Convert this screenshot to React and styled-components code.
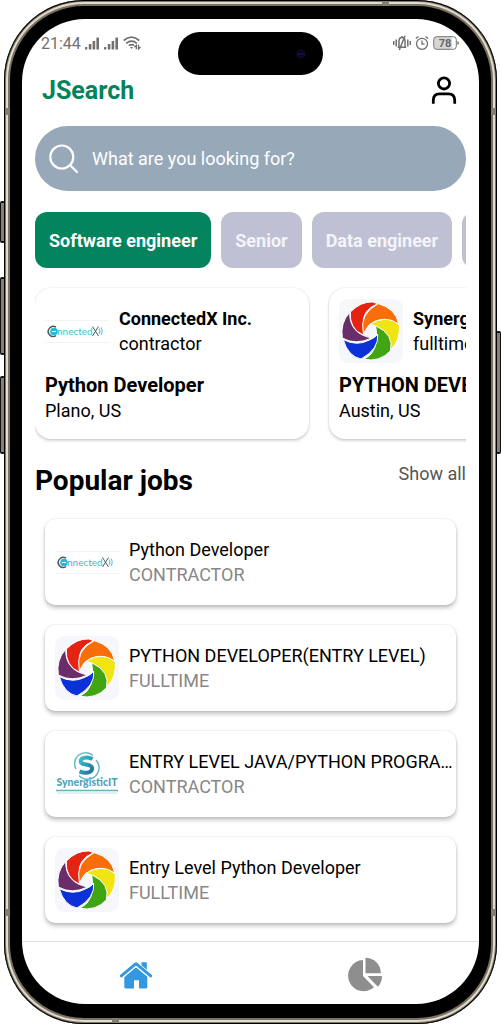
import React, { useState } from "react";
import styled, { createGlobalStyle, css } from "styled-components";

const GlobalStyle = createGlobalStyle`
  * { box-sizing: border-box; }
  body { margin: 0; background: #fff; color: #000; font-family: Roboto, "Liberation Sans", sans-serif; }
  h1, h2, h3, p, ul { margin: 0; padding: 0; }
  button, input { font: inherit; border: 0; }
  svg { display: block; }
`;

const Stage = styled.div`
  position: relative;
  padding: 0 4px;
`;

const Phone = styled.div`
  position: relative;
  display: flex;
  min-height: 100vh;
  padding: 19px 18px 20px;
  border-radius: 80px;
  background: #000;
  box-shadow: inset 0 0 0 1px #000, inset 0 0 0 2px #7d766a,
    inset 0 0 0 4px #e2dccf, inset 0 0 0 6px #7b7163;
`;

const SideKey = styled.span`
  position: absolute;
  top: ${(p) => p.$top}px;
  ${(p) => (p.$right ? "right: 0;" : "left: 0;")}
  width: 5px;
  height: ${(p) => p.$size}px;
  border: solid #111;
  border-width: 2px 1px;
  border-radius: 2px;
  background: #88816f;
`;

const Antenna = styled.span`
  position: absolute;
  background: #857d6e;
  ${(p) => (p.$vertical ? "width: 7px; height: 5px;" : "width: 5px; height: 7px;")}
  ${(p) => p.$side}: 1px;
  ${(p) => p.$from}: 108px;
`;

const Screen = styled.main`
  position: relative;
  flex: 1;
  min-width: 0;
  display: flex;
  flex-direction: column;
  overflow: hidden;
  border-radius: 63px;
  background: #fff;
`;

const Island = styled.div`
  position: absolute;
  top: 13px;
  left: 50%;
  width: 145px;
  height: 43px;
  margin-left: -73px;
  border-radius: 22px;
  background: #000;
  display: flex;
  align-items: center;
  justify-content: flex-end;
  padding-right: 16px;
`;

const StatusBar = styled.div`
  display: flex;
  align-items: center;
  justify-content: space-between;
  height: 48px;
  padding: 0 20px 0 19px;
  color: #707070;
  font-size: 16px;
`;

const StatusGroup = styled.div`
  display: flex;
  align-items: center;
  gap: 4px;
`;

const Header = styled.header`
  display: flex;
  align-items: center;
  justify-content: space-between;
  height: 48px;
  padding: 0 22px 0 20px;
`;

const Brand = styled.h1`
  color: #03845c;
  font-size: 25px;
  line-height: 32px;
`;

const IconButton = styled.button`
  padding: 0;
  background: none;
  color: #000;
`;

const Search = styled.label`
  display: flex;
  align-items: center;
  gap: 13px;
  height: 65px;
  margin: 11px 13px 0;
  padding: 0 24px 0 14px;
  border-radius: 33px;
  background: #97a9b8;
  color: #fff;
`;

const SearchInput = styled.input`
  flex: 1;
  min-width: 0;
  padding: 0;
  outline: 0;
  background: transparent;
  color: #fff;
  font-size: 18px;
  &::placeholder { color: #fff; opacity: 1; }
`;

const Chips = styled.nav`
  display: flex;
  gap: 10px;
  margin: 21px 13px 0;
  overflow: hidden;
`;

const Chip = styled.button`
  flex: none;
  height: 56px;
  padding: 0 14px;
  border-radius: 12px;
  background: ${(p) => (p.$active ? "#03845c" : "#bfc0d3")};
  color: ${(p) => (p.$active ? "#fff" : "#f3f4f9")};
  font-size: 18px;
  font-weight: 700;
  white-space: nowrap;
`;

const Carousel = styled.section`
  display: flex;
  gap: 20px;
  margin: 18px 13px 0;
  padding: 2px 0 8px;
  overflow: hidden;
`;

const cardBase = css`
  padding: 11px 10px;
  background: #fff;
`;

const JobCard = styled.article`
  ${cardBase}
  flex: none;
  width: 274px;
  height: 151px;
  border-radius: 16px;
  box-shadow: 0 0 2px rgba(0, 0, 0, 0.14), 0 2px 3px rgba(0, 0, 0, 0.16);
  white-space: nowrap;
`;

const CardTop = styled.div`
  display: flex;
  align-items: center;
  gap: 10px;
  margin-bottom: 10px;
`;

const Company = styled.h3`
  font-size: 18px;
  line-height: 25px;
`;

const JobTitle = styled.h3`
  font-size: 20px;
  line-height: 25px;
  overflow: hidden;
`;

const Detail = styled.p`
  font-size: 18px;
  line-height: 25px;
`;

const SectionHead = styled.div`
  display: flex;
  align-items: flex-start;
  justify-content: space-between;
  margin: 17px 13px 0;
`;

const SectionTitle = styled.h2`
  font-size: 28px;
  line-height: 34px;
`;

const ShowAll = styled.a`
  color: #555;
  font-size: 18px;
  line-height: 20px;
  text-decoration: none;
`;

const JobList = styled.ul`
  display: flex;
  flex-direction: column;
  gap: 20px;
  margin: 21px 23px 17px;
  list-style: none;
`;

const JobRow = styled.li`
  ${cardBase}
  display: flex;
  align-items: center;
  gap: 10px;
  padding-right: 3px;
  border-radius: 10px;
  box-shadow: 0 0 2px rgba(0, 0, 0, 0.14), 0 3px 4px rgba(0, 0, 0, 0.24);
`;

const RowText = styled.div`
  flex: 1;
  min-width: 0;
`;

const RowTitle = styled.p`
  font-size: 18px;
  line-height: 25px;
  overflow: hidden;
  text-overflow: ellipsis;
  white-space: nowrap;
`;

const RowType = styled(Detail)`
  color: #878787;
`;

const TabBar = styled.nav`
  display: flex;
  height: 63px;
  margin-top: auto;
  border-top: 1px solid #e0e0e0;
`;

const Tab = styled.button`
  flex: 1;
  display: flex;
  align-items: center;
  justify-content: center;
  padding: 4px 0 0;
  background: none;
  color: ${(p) => (p.$active ? "#3498e0" : "#8e8e8e")};
`;

const Bars = () => (
  <svg width="15" height="13" viewBox="0 0 15 13" fill="currentColor" aria-hidden="true">
    <rect x="0" y="10" width="2.300" height="2.5" rx=".6" />
    <rect x="3.800" y="7" width="2.600" height="5.5" rx=".6" />
    <rect x="7.600" y="4" width="2.600" height="8.5" rx=".6" />
    <rect x="11.400" y="0.5" width="2.600" height="12" rx=".6" />
  </svg>
);

const Wifi = () => (
  <svg width="18" height="14" viewBox="0 0 18 14" fill="none" stroke="currentColor" strokeWidth="1.7" aria-hidden="true">
    <path d="M.7 4.5Q8.5-2.2 16.3 4.5M3.2 7.3Q8.5 2.8 13.8 7.3M5.8 9.7Q8.5 7.6 11.2 9.4" />
    <path d="M7 11h3l-1.500 2z" fill="currentColor" stroke="none" />
    <path d="M13.400 13.300V9.300l-2 2M15.500 8.800v4.200l2-2" strokeWidth="1.300" />
  </svg>
);

const Vibrate = () => (
  <svg width="18" height="16" viewBox="0 0 18 16" fill="none" stroke="currentColor" strokeWidth="1.500" aria-hidden="true">
    <path d="M.7 6v4M3.200 4.500v7M14.800 4.500v7M17.300 6v4M4.700 12.300h8.600M6 12V6q0-3.500 3-3.500t3 3.500v6M12 .8 6.300 15M9 2.500V1" />
  </svg>
);

const Alarm = () => (
  <svg width="14" height="16" viewBox="0 0 14 16" fill="none" stroke="currentColor" strokeWidth="1.300" aria-hidden="true">
    <circle cx="7" cy="8.800" r="5.500" />
    <path d="M7 5.500v3.700h2.600M.8 3.600 3.500 1.400M13.200 3.600l-2.700-2.200" />
  </svg>
);

const Battery = () => (
  <svg width="26" height="14" viewBox="0 0 26 14" aria-hidden="true">
    <rect x="1" y="1" width="18" height="12" rx="2" fill="#d6d6d6" />
    <rect x=".7" y=".7" width="22.600" height="12.600" rx="3" fill="none" stroke="#747474" />
    <path d="M25 5.500v3" stroke="#747474" strokeWidth="1.500" />
    <text x="12" y="11" textAnchor="middle" fontSize="11" fontWeight="700" fill="#666">78</text>
  </svg>
);

const Camera = () => (
  <svg width="12" height="12" viewBox="0 0 12 12" aria-hidden="true">
    <circle cx="6" cy="6" r="5" fill="#080414" />
    <circle cx="6" cy="6" r="3.500" fill="none" stroke="#11103a" />
    <circle cx="4.500" cy="6" r="1" fill="#1b1d7c" />
    <circle cx="7.500" cy="6" r="1" fill="#1b1d7c" />
  </svg>
);

const Person = () => (
  <svg width="26" height="30" viewBox="0 0 26 30" fill="none" stroke="currentColor" strokeWidth="2.800" aria-hidden="true">
    <circle cx="13" cy="7.400" r="5.600" />
    <path d="M2.300 27.800v-3.300q0-6.600 6.200-6.600h9q6.200 0 6.200 6.600v3.300" />
  </svg>
);

const Magnifier = () => (
  <svg width="30" height="30" viewBox="0 0 30 30" fill="none" stroke="currentColor" strokeWidth="2.200" strokeLinecap="round" aria-hidden="true">
    <circle cx="12.800" cy="13" r="11.500" />
    <path d="m21 21 7 7" />
  </svg>
);

const House = () => (
  <svg width="34" height="28" viewBox="0 0 34 28" aria-hidden="true">
    <path fill="currentColor" d="M22.500 7V1.200h5.300v10.500z" />
    <path fill="currentColor" d="M5.300 15 17 5.300 28.300 15v11q0 1.500-1.500 1.500H20v-8.300h-5v8.300H6.800q-1.500 0-1.500-1.500z" />
    <path fill="none" stroke="#fff" strokeWidth="5" d="M2 15.500 17 3l15 12.500" />
    <path fill="none" stroke="currentColor" strokeWidth="3" strokeLinecap="round" strokeLinejoin="round" d="M2.300 14.800 17 2.700l14.700 12.100" />
  </svg>
);

const Pie = () => (
  <svg width="36" height="36" viewBox="0 0 36 36" fill="currentColor" aria-hidden="true">
    <path d="M16 3v16l11 11.300A15.600 15.600 0 1 1 16 3z" />
    <path d="M18.500 .7A15.300 15.300 0 0 1 33.800 16.200H18.500z" />
    <path d="M20.500 19H35q0 6.500-4.200 10.800z" />
  </svg>
);

const Pinwheel = () => (
  <svg width="64" height="64" viewBox="0 0 192 192" aria-hidden="true">
    <rect width="192" height="192" rx="27" fill="#f5f7fa" />
    <g stroke="#fff" strokeWidth="3" strokeLinejoin="round">
      <path fill="#e42313" d="M34 39Q66 7 101 9l15 5Q66 34 73 82l2 27Q30 91 34 39z" />
      <path fill="#fa6e0a" d="M118 14Q170 28 179 75 127 45 89 79L73 104Q60 43 118 14z" />
      <path fill="#f1e413" d="M181 77q4 48-27 77Q159 93 93 76 141 45 181 77z" />
      <path fill="#40a510" d="M154 156q-32 34-79 25 50-25 35-101 57 27 44 76z" />
      <path fill="#0b32d6" d="M13 122q42 21 78 1 19-7 25-18 5 45-50 75Q27 172 13 122z" />
      <path fill="#6b2d69" d="M32 40q-29 32-22 77 40 23 88 0Q31 104 32 40z" />
    </g>
  </svg>
);

const ConnectedX = () => (
  <svg width="64" height="64" viewBox="0 0 64 64" role="img" aria-label="ConnectedX">
    <path d="M0 21.500h64M0 43.500h64" stroke="#f3f3f3" />
    <path d="M11 28.200a5 5 0 1 0 0 8.400" fill="none" stroke="#555" strokeWidth="1.500" />
    <circle cx="9" cy="32.500" r="3.800" fill="#28b8df" />
    <path d="M7 32.500h4" stroke="#fff" />
    <text x="12" y="36" fontFamily="Lato, sans-serif" fontSize="10" fill="#42bdd3">nnected</text>
    <path d="m47.500 27.500 6 9.500M53.500 27.500l-6 9.500" stroke="#555" />
    <path d="M54 29.500q2 3 0 5.500M56 28.500q2.500 4 0 7.500" fill="none" stroke="#6acbdc" strokeWidth="1.200" />
  </svg>
);

const SynergisticIT = () => (
  <svg width="64" height="64" viewBox="0 0 64 64" role="img" aria-label="SynergisticIT">
    <defs>
      <linearGradient id="aqua" x1="0" y1="0" x2="1" y2="1">
        <stop offset="0" stopColor="#39c5cf" />
        <stop offset="1" stopColor="#246fa0" />
      </linearGradient>
    </defs>
    <path d="M38 13.500A11 11 0 0 0 21 27M24 33.500A11 11 0 0 0 41 18" fill="none" stroke="#6bb9c5" strokeWidth="1.500" />
    <path d="M37.500 17q-6.500-3-11 0-3 4.500 4.500 5.500 8 1 5.500 6-3.500 4-12 1" fill="none" stroke="url(#aqua)" strokeWidth="4" />
    <text x="32" y="44" textAnchor="middle" fontFamily="Lato, sans-serif" fontSize="10.500" fontWeight="900" fill="#4aa3bb">SynergisticIT</text>
    <path d="M1 48.500h62" stroke="#6aafbb" strokeWidth="1.500" />
    <path d="M2 51h60" stroke="#c5e1e5" />
  </svg>
);

const logos = { connectedx: ConnectedX, pinwheel: Pinwheel, synergistic: SynergisticIT };

const filters = ["Software engineer", "Senior", "Data engineer", "Junior"];

const featured = [
  { logo: "connectedx", company: "ConnectedX Inc.", type: "contractor", title: "Python Developer", place: "Plano, US" },
  { logo: "pinwheel", company: "Synergisticit", type: "fulltime", title: "PYTHON DEVELOPER(ENTRY LEVEL)", place: "Austin, US" },
];

const popular = [
  { logo: "connectedx", title: "Python Developer", type: "CONTRACTOR" },
  { logo: "pinwheel", title: "PYTHON DEVELOPER(ENTRY LEVEL)", type: "FULLTIME" },
  { logo: "synergistic", title: "ENTRY LEVEL JAVA/PYTHON PROGRAMMER", type: "CONTRACTOR" },
  { logo: "pinwheel", title: "Entry Level Python Developer", type: "FULLTIME" },
];

export default function App() {
  const [filter, setFilter] = useState(filters[0]);
  const [tab, setTab] = useState("home");

  return (
    <>
      <GlobalStyle />
      <Stage>
        <SideKey $top={201} $size={42} />
        <SideKey $top={277} $size={78} />
        <SideKey $top={376} $size={78} />
        <SideKey $top={331} $size={123} $right />
        <Phone>
          <Antenna $side="left" $from="top" />
          <Antenna $side="left" $from="bottom" />
          <Antenna $side="right" $from="top" />
          <Antenna $side="right" $from="bottom" />
          <Antenna $side="top" $from="right" $vertical />
          <Antenna $side="bottom" $from="left" $vertical />
          <Screen>
            <StatusBar>
              <StatusGroup>
                <span>21:44</span>
                <Bars />
                <Bars />
                <Wifi />
              </StatusGroup>
              <StatusGroup>
                <Vibrate />
                <Alarm />
                <Battery />
              </StatusGroup>
            </StatusBar>
            <Island>
              <Camera />
            </Island>
            <Header>
              <Brand>JSearch</Brand>
              <IconButton type="button" aria-label="Profile">
                <Person />
              </IconButton>
            </Header>
            <Search>
              <Magnifier />
              <SearchInput type="text" aria-label="Search jobs" placeholder="What are you looking for?" />
            </Search>
            <Chips>
              {filters.map((name) => (
                <Chip key={name} type="button" $active={name === filter} onClick={() => setFilter(name)}>
                  {name}
                </Chip>
              ))}
            </Chips>
            <Carousel>
              {featured.map((job) => {
                const Logo = logos[job.logo];
                return (
                  <JobCard key={job.company}>
                    <CardTop>
                      <Logo />
                      <div>
                        <Company>{job.company}</Company>
                        <Detail>{job.type}</Detail>
                      </div>
                    </CardTop>
                    <JobTitle>{job.title}</JobTitle>
                    <Detail>{job.place}</Detail>
                  </JobCard>
                );
              })}
            </Carousel>
            <SectionHead>
              <SectionTitle>Popular jobs</SectionTitle>
              <ShowAll href="#all">Show all</ShowAll>
            </SectionHead>
            <JobList>
              {popular.map((job) => {
                const Logo = logos[job.logo];
                return (
                  <JobRow key={job.title}>
                    <Logo />
                    <RowText>
                      <RowTitle>{job.title}</RowTitle>
                      <RowType>{job.type}</RowType>
                    </RowText>
                  </JobRow>
                );
              })}
            </JobList>
            <TabBar>
              <Tab type="button" aria-label="Home" $active={tab === "home"} onClick={() => setTab("home")}>
                <House />
              </Tab>
              <Tab type="button" aria-label="Statistics" $active={tab === "stats"} onClick={() => setTab("stats")}>
                <Pie />
              </Tab>
            </TabBar>
          </Screen>
        </Phone>
      </Stage>
    </>
  );
}
